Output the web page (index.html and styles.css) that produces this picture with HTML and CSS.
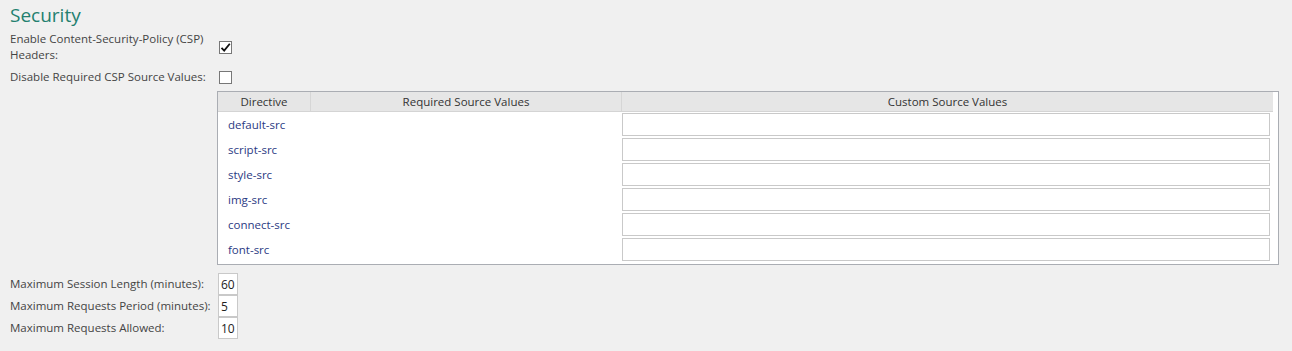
FILE: index.html
```html
<html>
   <head>
      <title>Security</title>
      <link rel="stylesheet" href="styles.css">
   </head>
   <body>
      <div class="section">
         <h2 class="title">Security</h2>
         <div class="field">
            <label class="label" for="csp">Enable Content-Security-Policy (CSP) Headers:</label>
            <span class="check checked" id="csp">
               <svg width="11" height="11" viewBox="0 0 11 11"><path d="M1.5 5.8 L4.2 8.6 L9.8 1.8" fill="none" stroke="#111" stroke-width="1.8"/></svg>
            </span>
         </div>
         <div class="field">
            <label class="label" for="disable">Disable Required CSP Source Values:</label>
            <span class="check" id="disable"></span>
         </div>
         <div class="grid">
            <div class="grid-head">
               <div class="col col-dir">Directive</div>
               <div class="col col-req">Required Source Values</div>
               <div class="col col-custom">Custom Source Values</div>
            </div>
            <div class="grid-row"><div class="col-dir name">default-src</div><div class="col-req"></div><div class="col-custom"><input type="text" class="text"></div></div>
            <div class="grid-row"><div class="col-dir name">script-src</div><div class="col-req"></div><div class="col-custom"><input type="text" class="text"></div></div>
            <div class="grid-row"><div class="col-dir name">style-src</div><div class="col-req"></div><div class="col-custom"><input type="text" class="text"></div></div>
            <div class="grid-row"><div class="col-dir name">img-src</div><div class="col-req"></div><div class="col-custom"><input type="text" class="text"></div></div>
            <div class="grid-row"><div class="col-dir name">connect-src</div><div class="col-req"></div><div class="col-custom"><input type="text" class="text"></div></div>
            <div class="grid-row"><div class="col-dir name">font-src</div><div class="col-req"></div><div class="col-custom"><input type="text" class="text"></div></div>
         </div>
         <div class="limits">
            <div class="limit"><label class="label">Maximum Session Length (minutes):</label><input type="text" class="num" value="60"></div>
            <div class="limit"><label class="label">Maximum Requests Period (minutes):</label><input type="text" class="num" value="5"></div>
            <div class="limit"><label class="label">Maximum Requests Allowed:</label><input type="text" class="num" value="10"></div>
         </div>
      </div>
   </body>
</html>
```

FILE: styles.css
```css
body {
   margin: 0;
   background: #f0f0f0;
   font-family: "Open Sans", "Noto Sans", sans-serif;
   font-size: 11.5px;
   color: #444;
}
.section {
   padding: 3px 0 0 10px;
}
.title {
   margin: 0 0 4px 0;
   font-size: 19px;
   font-weight: normal;
   color: #23806f;
   line-height: 24px;
}
.field {
   display: flex;
   align-items: center;
   margin-bottom: 6px;
}
.label {
   width: 208px;
   line-height: 16px;
   flex-shrink: 0;
}
.field .label {
   width: 200px;
   margin-right: 9px;
}
.check {
   width: 11px;
   height: 11px;
   border: 1px solid #777;
   background: #fff;
   display: inline-flex;
   align-items: center;
   justify-content: center;
}
.grid {
   margin: 3px 0 0 207px;
   width: 1062px;
   border: 1px solid #aaadb3;
   background: #fff;
   box-sizing: border-box;
   padding-bottom: 2px;
}
.grid-head {
   display: flex;
   background: #e6e6e6;
   height: 19px;
   margin-right: 5px;
   border-bottom: 1px solid #d4d4d4;
}
.grid-head .col {
   line-height: 19px;
   text-align: center;
   color: #333;
   border-right: 1px solid #d6d6d6;
}
.grid-head .col-dir {
   width: 92px;
}
.grid-head .col:last-child {
   border-right: none;
}
.col-dir {
   width: 94px;
   flex-shrink: 0;
}
.col-req {
   width: 310px;
   flex-shrink: 0;
}
.col-custom {
   flex: 1;
}
.grid-row {
   display: flex;
   align-items: center;
   height: 25px;
   margin-right: 8px;
}
.name {
   color: #2b3a83;
   padding-left: 10px;
   box-sizing: border-box;
}
.text {
   width: 100%;
   height: 23px;
   border: 1px solid #c9c9c9;
   box-sizing: border-box;
   margin: 0;
   outline: none;
}
.limits {
   margin-top: 8px;
}
.limit {
   display: flex;
   align-items: center;
}
.num {
   width: 20px;
   height: 22px;
   margin: 0;
   border: 1px solid #c9c9c9;
   box-sizing: border-box;
   padding: 0 2px;
   font: inherit;
   font-size: 12px;
   color: #222;
   outline: none;
}
```
